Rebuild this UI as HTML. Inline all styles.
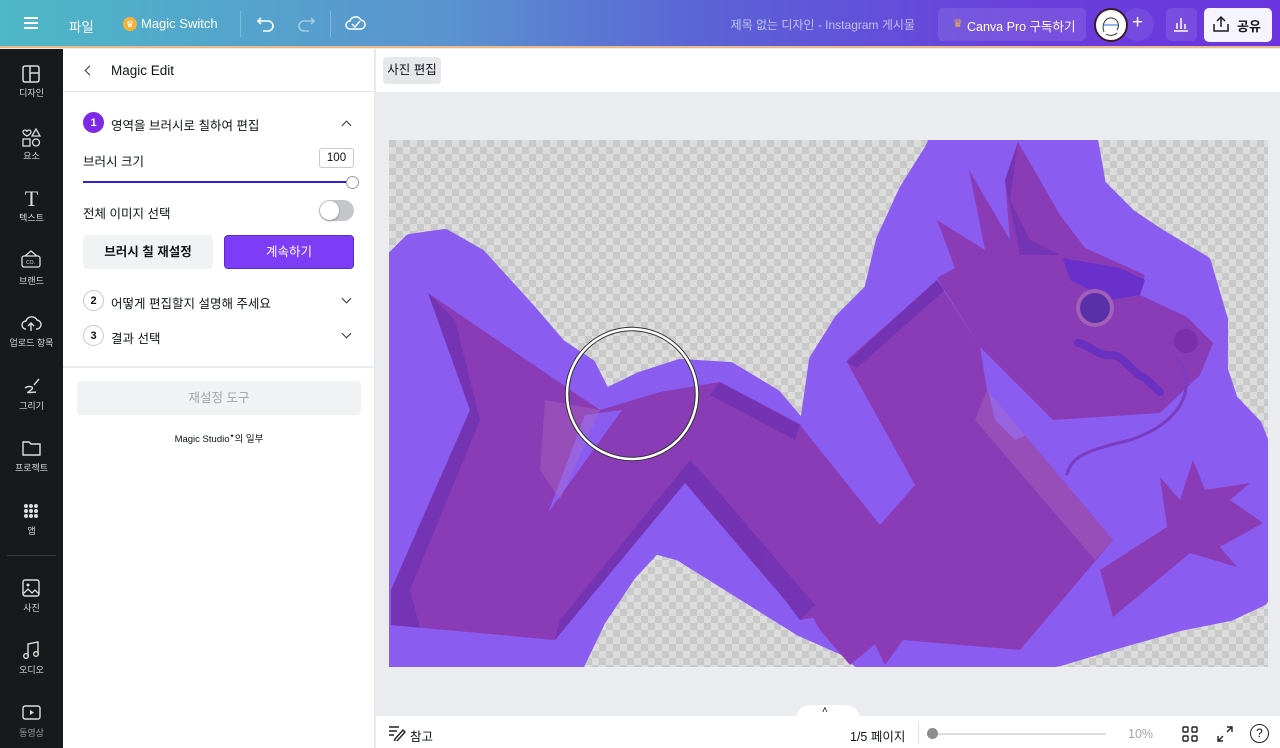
<!DOCTYPE html>
<html><head><meta charset="utf-8">
<style>
*{box-sizing:border-box;margin:0;padding:0}
body{width:1280px;height:748px;overflow:hidden;font-family:"Liberation Sans","Noto Sans CJK KR",sans-serif;background:#ebecf0;position:relative;color:#0e1318}
.abs{position:absolute}
#top{left:0;top:0;width:1280px;height:48px;background:linear-gradient(90deg,#4db8c7 0%,#5a93cf 35%,#5b63d6 55%,#6a3fdc 80%,#6a35de 100%);border-bottom:2px solid #e9b98c}
#top .t{color:#fff;font-size:13.5px;position:absolute;top:16px;white-space:nowrap}
#side{left:0;top:49px;width:63px;height:699px;background:#18191b}
.si{position:absolute;left:0;width:63px;text-align:center;color:#d8d9dc;font-size:9px}
#panel{left:63px;top:49px;width:312px;height:699px;background:#fff;border-right:1px solid #e3e4e7}
.num{position:absolute;width:21px;height:21px;border-radius:50%;border:1px solid #c8c9cc;font-size:11px;display:flex;align-items:center;justify-content:center;background:#fff;font-weight:bold}
.pt{position:absolute;font-size:12.5px;white-space:nowrap}
.chev{position:absolute;width:7px;height:7px;border-left:1.5px solid #333;border-top:1.5px solid #333}
</style></head><body>

<div id="top" class="abs">
 <div class="abs" style="left:24px;top:17px;width:14px;height:2px;background:#fff;box-shadow:0 5px 0 #fff,0 10px 0 #fff"></div>
 <div class="t" style="left:69px">파일</div>
 <div class="abs" style="left:123px;top:17px;width:14px;height:14px;border-radius:50%;background:#f5b335;color:#fff;font-size:9px;text-align:center;line-height:14px">♛</div>
 <div class="t" style="left:141px;font-size:13px">Magic Switch</div>
 <div class="abs" style="left:240px;top:11px;width:1px;height:26px;background:rgba(255,255,255,.25)"></div>
 <svg class="abs" style="left:256px;top:15px" width="20" height="18" viewBox="0 0 20 18"><path d="M5 3L2 6l3 3M2 6h10a5 5 0 010 10H7" fill="none" stroke="#fff" stroke-width="1.6"/></svg>
 <svg class="abs" style="left:296px;top:15px" width="20" height="18" viewBox="0 0 20 18"><path d="M15 3l3 3-3 3M18 6H8a5 5 0 000 10h5" fill="none" stroke="rgba(255,255,255,.45)" stroke-width="1.6"/></svg>
 <div class="abs" style="left:330px;top:11px;width:1px;height:26px;background:rgba(255,255,255,.25)"></div>
 <svg class="abs" style="left:344px;top:14px" width="22" height="18" viewBox="0 0 22 18"><path d="M6 15a4 4 0 010-8 6 6 0 0111-1 4.5 4.5 0 01-1 9z M8 10l3 3 5-6" fill="none" stroke="#fff" stroke-width="1.5"/></svg>
 <div class="t" style="right:365px;font-size:12px;color:rgba(255,255,255,.62)">제목 없는 디자인 - Instagram 게시물</div>
 <div class="abs" style="left:938px;top:8px;width:148px;height:33px;border-radius:5px;background:rgba(255,255,255,.1)"></div>
 <div class="t" style="left:953px;font-size:11px;top:17px;color:#f0b040">♛</div>
 <div class="t" style="left:967px;font-size:12.5px">Canva Pro 구독하기</div>
 <div class="abs" style="left:1121px;top:8px;width:33px;height:33px;border-radius:50%;background:rgba(255,255,255,.08)"></div>
 <div class="abs" style="left:1094px;top:8px;width:34px;height:34px;border-radius:50%;background:#fff;border:2px solid #3a1b2a"></div>
 <svg class="abs" style="left:1098px;top:12px" width="26" height="26"><path d="M6 20c-3-8 2-15 8-14s8 7 5 12M8 22c3 2 8 2 11-1" fill="none" stroke="#333" stroke-width="1"/><path d="M6 13h14" stroke="#4a8fe0" stroke-width="1.3"/></svg>
 <div class="t" style="left:1132px;top:12px;font-size:19px">+</div>
 <div class="abs" style="left:1166px;top:8px;width:31px;height:33px;border-radius:5px;background:rgba(255,255,255,.1)"></div>
 <svg class="abs" style="left:1172px;top:15px" width="18" height="18"><path d="M2 16h14M5 14V8M9 14V3M13 14V9" stroke="#fff" stroke-width="1.5"/></svg>
 <div class="abs" style="left:1204px;top:8px;width:68px;height:34px;border-radius:5px;background:#f6f4fe"></div>
 <svg class="abs" style="left:1212px;top:15px" width="18" height="18"><path d="M9 12V2M5 6l4-4 4 4M2 9v7h14V9" fill="none" stroke="#1b1b24" stroke-width="1.5"/></svg>
 <div class="t" style="left:1237px;color:#14141c;font-weight:bold;font-size:13px">공유</div>
</div>

<div id="side" class="abs">
 <svg class="abs" style="left:22px;top:16px" width="18" height="18"><rect x="1" y="1" width="16" height="16" rx="2" fill="none" stroke="#ddd" stroke-width="1.5"/><path d="M8 1v16M8 8h9" stroke="#ddd" stroke-width="1.5"/></svg>
 <div class="si" style="top:37px">디자인</div>
 <svg class="abs" style="left:21px;top:79px" width="20" height="20"><path d="M2 4a2 2 0 014 0 2 2 0 014 0c0 2-4 4-4 4S2 6 2 4z" fill="none" stroke="#ddd" stroke-width="1.3"/><path d="M15 1l4 7h-8z" fill="none" stroke="#ddd" stroke-width="1.3"/><rect x="2" y="11" width="7" height="7" fill="none" stroke="#ddd" stroke-width="1.3"/><circle cx="15" cy="14.5" r="3.5" fill="none" stroke="#ddd" stroke-width="1.3"/></svg>
 <div class="si" style="top:100px">요소</div>
 <div class="si" style="top:137px;font-size:22px;font-family:'Liberation Serif',serif;color:#ddd">T</div>
 <div class="si" style="top:162px">텍스트</div>
 <svg class="abs" style="left:21px;top:201px" width="20" height="18"><rect x="1" y="6" width="18" height="11" rx="2" fill="none" stroke="#ddd" stroke-width="1.3"/><path d="M4 6l6-5 6 5" fill="none" stroke="#ddd" stroke-width="1.3"/><text x="5" y="14" font-size="5" fill="#ddd" font-family="Liberation Sans">CO.</text></svg>
 <div class="si" style="top:225px">브랜드</div>
 <svg class="abs" style="left:20px;top:265px" width="22" height="18"><path d="M6 15a4 4 0 010-8 6 6 0 0111-1 4.5 4.5 0 01-1 9M11 17V9M8 12l3-3 3 3" fill="none" stroke="#ddd" stroke-width="1.4"/></svg>
 <div class="si" style="top:287px">업로드 항목</div>
 <svg class="abs" style="left:22px;top:327px" width="20" height="18"><path d="M12 9l5-6M3 12c5-3 10-1 6 2s-6 3 5 2" fill="none" stroke="#ddd" stroke-width="1.4"/></svg>
 <div class="si" style="top:350px">그리기</div>
 <svg class="abs" style="left:22px;top:391px" width="19" height="16"><path d="M1 2h6l2 2h9v11H1z" fill="none" stroke="#ddd" stroke-width="1.4"/></svg>
 <div class="si" style="top:412px">프로젝트</div>
 <svg class="abs" style="left:23px;top:454px" width="16" height="16"><g fill="#ddd"><circle cx="3" cy="3" r="2"/><circle cx="8" cy="3" r="2"/><circle cx="13" cy="3" r="2"/><circle cx="3" cy="8" r="2"/><circle cx="8" cy="8" r="2"/><circle cx="13" cy="8" r="2"/><circle cx="3" cy="13" r="2"/><circle cx="8" cy="13" r="2"/><circle cx="13" cy="13" r="2"/></g></svg>
 <div class="si" style="top:475px">앱</div>
 <div class="abs" style="left:7px;top:506px;width:49px;height:1px;background:#3a3b3e"></div>
 <svg class="abs" style="left:22px;top:530px" width="18" height="18"><rect x="1" y="1" width="16" height="16" rx="2" fill="none" stroke="#ddd" stroke-width="1.4"/><circle cx="6" cy="6" r="1.5" fill="#ddd"/><path d="M1 15l5-5 4 4 3-3 4 4" fill="none" stroke="#ddd" stroke-width="1.3"/></svg>
 <div class="si" style="top:552px">사진</div>
 <svg class="abs" style="left:22px;top:592px" width="18" height="18"><path d="M6 15V3l10-2v12" fill="none" stroke="#ddd" stroke-width="1.4"/><circle cx="4" cy="15" r="2.3" fill="none" stroke="#ddd" stroke-width="1.4"/><circle cx="14" cy="13" r="2.3" fill="none" stroke="#ddd" stroke-width="1.4"/></svg>
 <div class="si" style="top:614px">오디오</div>
 <svg class="abs" style="left:22px;top:656px" width="19" height="15"><rect x="1" y="1" width="17" height="13" rx="2" fill="none" stroke="#ddd" stroke-width="1.4"/><path d="M8 5v5l4-2.5z" fill="#ddd"/></svg>
 <div class="si" style="top:677px;color:#9a9a9e">동영상</div>
</div>

<div id="panel" class="abs">
 <div class="chev" style="left:23px;top:18px;transform:rotate(-45deg)"></div>
 <div class="pt" style="left:48px;top:14px;font-size:13.5px">Magic Edit</div>
 <div class="abs" style="left:0;top:42px;width:312px;height:1px;background:#e6e7ea"></div>
 <div class="num" style="left:20px;top:63px;background:#7d2ae8;border-color:#7d2ae8;color:#fff">1</div>
 <div class="pt" style="left:48px;top:66px">영역을 브러시로 칠하여 편집</div>
 <div class="chev" style="left:280px;top:73px;transform:rotate(45deg)"></div>
 <div class="pt" style="left:20px;top:102px">브러시 크기</div>
 <div class="abs" style="left:256px;top:99px;width:35px;height:20px;border:1px solid #c9cacd;border-radius:3px;font-size:11.5px;text-align:center;line-height:18px">100</div>
 <div class="abs" style="left:20px;top:132px;width:270px;height:2px;background:#2b24d6"></div>
 <div class="abs" style="left:283px;top:127px;width:13px;height:13px;border-radius:50%;background:#fff;border:1px solid #9a9ba0"></div>
 <div class="pt" style="left:20px;top:154px">전체 이미지 선택</div>
 <div class="abs" style="left:256px;top:151px;width:35px;height:21px;border-radius:11px;background:#c5c6c9"></div>
 <div class="abs" style="left:257px;top:152px;width:19px;height:19px;border-radius:50%;background:#fff;box-shadow:0 1px 2px rgba(0,0,0,.3)"></div>
 <div class="abs" style="left:20px;top:186px;width:130px;height:34px;border-radius:4px;background:#f1f2f4;font-size:12.5px;font-weight:bold;text-align:center;line-height:34px">브러시 칠 재설정</div>
 <div class="abs" style="left:161px;top:186px;width:130px;height:34px;border-radius:4px;background:#7d3df6;border:1px solid #5a2ad0;color:#fff;font-size:12.5px;text-align:center;line-height:32px">계속하기</div>
 <div class="num" style="left:20px;top:241px">2</div>
 <div class="pt" style="left:48px;top:244px">어떻게 편집할지 설명해 주세요</div>
 <div class="chev" style="left:280px;top:246px;transform:rotate(225deg)"></div>
 <div class="num" style="left:20px;top:276px">3</div>
 <div class="pt" style="left:48px;top:279px">결과 선택</div>
 <div class="chev" style="left:280px;top:281px;transform:rotate(225deg)"></div>
 <div class="abs" style="left:0;top:317px;width:312px;height:2px;background:#eceded"></div>
 <div class="abs" style="left:14px;top:332px;width:284px;height:34px;border-radius:4px;background:#f1f2f4;color:#a2a3a7;font-size:12.5px;text-align:center;line-height:34px">재설정 도구</div>
 <div class="abs" style="left:0;top:382px;width:312px;text-align:center;font-size:9.5px">Magic Studio<sup style="font-size:6px">✦</sup>의 일부</div>
</div>

<div class="abs" style="left:376px;top:49px;width:904px;height:43px;background:#fff"></div>
<div class="abs" style="left:383px;top:57px;width:58px;height:27px;border-radius:4px;background:#e6e7ea;font-size:12.5px;text-align:center;line-height:27px">사진 편집</div>

<svg class="abs" style="left:0;top:0" width="1280" height="748">
 <defs>
  <pattern id="ck" width="14" height="14" patternUnits="userSpaceOnUse" x="389" y="140">
   <rect width="14" height="14" fill="#dcdcdc"/><rect width="7" height="7" fill="#c9c9c9"/><rect x="7" y="7" width="7" height="7" fill="#c9c9c9"/>
  </pattern>
  <clipPath id="cl"><rect x="389" y="140" width="879" height="527"/></clipPath>
 </defs>
 <rect x="389" y="140" width="879" height="527" fill="url(#ck)"/>
 <g clip-path="url(#cl)">
  <polygon fill="#8b5cf0" stroke="#8b5cf0" stroke-width="12" stroke-linejoin="round" points="385,265 410,240 445,235 480,255 530,310 560,345 590,365 605,395 640,378 680,365 730,368 775,395 805,430 815,360 840,320 870,290 882,240 905,190 930,150 935,140 1092,140 1100,185 1130,215 1160,235 1205,262 1222,320 1222,370 1232,400 1256,425 1266,450 1275,560 1262,600 1230,615 1180,625 1120,642 1060,660 990,672 870,672 845,650 800,630 760,605 720,580 680,555 655,548 630,575 600,620 575,672 385,672"/>
  <g fill="#8a3cb6">
   <polygon points="428,293 600,410 660,392 720,382 830,440 847,360 937,280 980,347 987,390 1113,540 1020,650 903,640 885,665 868,630 830,615 800,620 785,600 685,483 555,640 391,625 391,590 470,410"/>
   <polygon points="937,278 955,268 937,220 985,250 969,170 1010,240 1005,180 1018,142 1060,215 1085,248 1145,275 1140,295 1187,317 1213,343 1200,375 1160,413 1053,420 980,347"/>
   <polygon points="1100,570 1167,527 1160,477 1180,500 1193,460 1205,490 1250,483 1230,500 1263,523 1220,547 1237,567 1190,553 1113,617"/>
   <polygon points="900,560 930,520 955,545 975,530 1000,560 960,600 880,640 850,665 820,630 800,595 850,600"/>
  </g>
  <polygon fill="#8b5cf0" points="585,415 622,410 548,513"/>
  <polygon fill="#8b5cf0" points="800,425 847,362 915,485 880,525"/>
  <polygon fill="#8b5cf0" points="985,378 1055,422 1015,440 995,420"/>
  <g fill="#5a2ab0" opacity=".45">
   <polygon points="428,293 470,410 391,590 391,625 420,628 410,590 480,420 455,320"/>
   <polygon points="685,483 785,600 800,620 815,605 700,470"/>
   <polygon points="555,640 685,483 700,470 690,460 560,620"/>
   <polygon points="720,382 800,425 795,440 710,395"/>
   <polygon points="847,362 937,280 945,290 857,368"/>
   <polygon points="1005,180 1018,142 1010,200 1030,240 1060,255 1020,255"/>
  </g>
  <g fill="#b070c0" opacity=".35">
   <polygon points="545,400 600,410 560,500 540,470"/>
   <polygon points="987,390 1113,540 1095,560 975,420"/>
  </g>
  <path d="M1063 258 L1120 268 L1145 280 L1140 295 L1110 300 L1070 280z" fill="#6a30cc"/>
  <circle cx="1095" cy="308" r="19" fill="#a060b8"/>
  <circle cx="1095" cy="308" r="15" fill="#5a30a8"/>
  <circle cx="1186" cy="341" r="12" fill="#7a30a8"/>
  <path d="M1078 343 C1090 345 1095 355 1110 355 C1125 355 1130 372 1145 378 L1160 392" stroke="#6a30c0" stroke-width="8" fill="none" stroke-linecap="round"/>
  <path d="M1177 358 C1195 380 1190 420 1130 440 C1090 450 1072 455 1067 474" stroke="#7a3cc0" stroke-width="3" fill="none" stroke-linecap="round"/>
 </g>
 <circle cx="632" cy="394" r="65" fill="none" stroke="#333" stroke-width="4.5"/>
 <circle cx="632" cy="394" r="65" fill="none" stroke="#fff" stroke-width="2.5"/>
</svg>

<div class="abs" style="left:376px;top:716px;width:904px;height:32px;background:#fff"></div>
<div class="abs" style="left:796px;top:705px;width:64px;height:14px;background:#fff;border-radius:14px 14px 0 0"></div>
<div class="abs" style="left:822px;top:705px;font-size:10px">˄</div>
<svg class="abs" style="left:388px;top:725px" width="18" height="16"><path d="M1 2h10M1 6h8M1 10h5M7 14l8-9 2 2-8 9-3 1z" fill="none" stroke="#222" stroke-width="1.4"/></svg>
<div class="abs" style="left:410px;top:726px;font-size:12.5px">참고</div>
<div class="abs" style="left:850px;top:726px;font-size:12.5px">1/5 페이지</div>
<div class="abs" style="left:918px;top:722px;width:1px;height:22px;background:#e2e3e5"></div>
<div class="abs" style="left:938px;top:733px;width:168px;height:2px;background:#dcdde0"></div>
<div class="abs" style="left:927px;top:728px;width:11px;height:11px;border-radius:50%;background:#8d8e92"></div>
<div class="abs" style="left:1128px;top:727px;font-size:12.5px;color:#a4a5a9">10%</div>
<svg class="abs" style="left:1182px;top:726px" width="16" height="16"><g fill="none" stroke="#222" stroke-width="1.4"><rect x="1" y="1" width="5" height="5" rx="1"/><rect x="10" y="1" width="5" height="5" rx="1"/><rect x="1" y="10" width="5" height="5" rx="1"/><rect x="10" y="10" width="5" height="5" rx="1"/></g></svg>
<svg class="abs" style="left:1217px;top:726px" width="16" height="16"><path d="M10 1h5v5M15 1l-5 5M6 15H1v-5M1 15l5-5" fill="none" stroke="#222" stroke-width="1.4"/></svg>
<div class="abs" style="left:1250px;top:724px;width:19px;height:19px;border-radius:50%;border:1.5px solid #222;font-size:12px;text-align:center;line-height:16px">?</div>
</body></html>
